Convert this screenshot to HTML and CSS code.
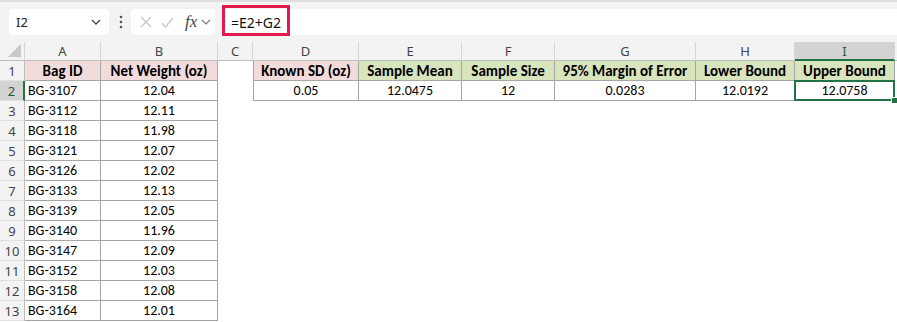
FILE: index.html
```html
<!DOCTYPE html>
<html lang="en">
<head>
<meta charset="UTF-8">
<title>Confidence Interval - Sheet1</title>
<link rel="stylesheet" href="styles.css">
</head>
<body>
    <div class="toolbar">
        <div class="name-box">
            <span>I2</span>
            <svg class="chev" width="10" height="6" viewBox="0 0 10 6"><polyline points="1,1 5,5 9,1" fill="none" stroke="#444" stroke-width="1.3"/></svg>
        </div>
        <svg class="dots" width="4" height="14" viewBox="0 0 4 14"><circle cx="2" cy="2" r="1.3" fill="#555"/><circle cx="2" cy="7" r="1.3" fill="#555"/><circle cx="2" cy="12" r="1.3" fill="#555"/></svg>
        <div class="fx-box">
            <svg width="12" height="12" viewBox="0 0 12 12"><path d="M1 1 L11 11 M11 1 L1 11" stroke="#c4c4c4" stroke-width="1.2"/></svg>
            <svg width="13" height="11" viewBox="0 0 13 11"><polyline points="1,6 4.5,10 12,1" fill="none" stroke="#c4c4c4" stroke-width="1.2"/></svg>
            <span class="fx">fx</span>
            <svg class="chev" width="10" height="6" viewBox="0 0 10 6"><polyline points="1,1 5,5 9,1" fill="none" stroke="#777" stroke-width="1.2"/></svg>
        </div>
        <div class="formula">
            <span class="formula-text">=E2+G2</span>
        </div>
    </div>

    <div class="sheet">
        <div class="corner"><span class="tri"></span></div>
        <div class="ch">A</div>
        <div class="ch">B</div>
        <div class="ch">C</div>
        <div class="ch">D</div>
        <div class="ch">E</div>
        <div class="ch">F</div>
        <div class="ch">G</div>
        <div class="ch">H</div>
        <div class="ch sel">I</div>
        <div class="ch end"></div>

        <div class="rh">1</div>
        <div class="g hd pink">Bag ID</div>
        <div class="g hd pink">Net Weight (oz)</div>
        <div class="e"></div>
        <div class="g l hd pink">Known SD (oz)</div>
        <div class="g hd green">Sample Mean</div>
        <div class="g hd green">Sample Size</div>
        <div class="g hd green">95% Margin of Error</div>
        <div class="g hd green">Lower Bound</div>
        <div class="g hd green">Upper Bound</div>

        <div class="rh sel">2</div>
        <div class="g">BG-3107</div>
        <div class="g n">12.04</div>
        <div class="e"></div>
        <div class="g l n">0.05</div>
        <div class="g n">12.0475</div>
        <div class="g n">12</div>
        <div class="g n">0.0283</div>
        <div class="g n">12.0192</div>
        <div class="g n active">12.0758<span class="cursor"></span></div>

        <div class="rh">3</div><div class="g">BG-3112</div><div class="g n">12.11</div>
        <div class="rh">4</div><div class="g">BG-3118</div><div class="g n">11.98</div>
        <div class="rh">5</div><div class="g">BG-3121</div><div class="g n">12.07</div>
        <div class="rh">6</div><div class="g">BG-3126</div><div class="g n">12.02</div>
        <div class="rh">7</div><div class="g">BG-3133</div><div class="g n">12.13</div>
        <div class="rh">8</div><div class="g">BG-3139</div><div class="g n">12.05</div>
        <div class="rh">9</div><div class="g">BG-3140</div><div class="g n">11.96</div>
        <div class="rh">10</div><div class="g">BG-3147</div><div class="g n">12.09</div>
        <div class="rh">11</div><div class="g">BG-3152</div><div class="g n">12.03</div>
        <div class="rh">12</div><div class="g">BG-3158</div><div class="g n">12.08</div>
        <div class="rh">13</div><div class="g">BG-3164</div><div class="g n">12.01</div>
    </div>
</body>
</html>
```

FILE: styles.css
```css
/* Page */
body {
    margin: 0;
    font-family: Calibri, Carlito, "Liberation Sans", sans-serif;
    background-color: #fff;
    color: #000;
    overflow: hidden;
}

/* Formula bar */
.toolbar {
    height: 40px;
    border-top: 2px solid #dedede;
    background-color: #f3f3f3;
    display: flex;
    align-items: center;
    padding-left: 9px;
    position: relative;
}

.name-box {
    width: 100px;
    height: 26px;
    box-sizing: border-box;
    background-color: #fff;
    border-radius: 4px;
    display: flex;
    align-items: center;
    justify-content: space-between;
    padding: 0 8px 0 7px;
    font-family: "Noto Sans", sans-serif;
    font-size: 13px;
    color: #222;
}

.dots {
    margin: 0 8px 0 10px;
}

.fx-box {
    width: 84px;
    height: 26px;
    box-sizing: border-box;
    background-color: #fff;
    border-radius: 4px;
    display: flex;
    align-items: center;
    gap: 9px;
    padding-left: 9px;
}

.fx {
    font-family: "Liberation Serif", serif;
    font-style: italic;
    font-size: 17px;
    color: #444;
    margin-left: 2px;
    margin-right: -5px;
}

.formula {
    flex: 1;
    height: 26px;
    margin-left: 7px;
    background-color: #fff;
    border-radius: 4px 0 0 4px;
    display: flex;
    align-items: center;
    position: relative;
}

.formula-text {
    font-family: "Noto Sans", sans-serif;
    font-size: 14px;
    color: #111;
    margin-left: 9px;
}

/* red highlight drawn over the formula field */
.formula::before {
    content: "";
    position: absolute;
    left: 0;
    top: -4px;
    width: 68px;
    height: 31px;
    box-sizing: border-box;
    border: 3px solid #e31b4d;
}

/* Grid */
.sheet {
    display: grid;
    grid-template-columns: 25px 76px 117px 35px 106px 103px 93px 141px 99px 100px 1fr;
    grid-template-rows: 19px;
    grid-auto-rows: 20px;
    font-size: 14px;
}

.corner,
.ch {
    background-color: #f3f3f3;
    border-right: 1px solid #d6d6d6;
    border-bottom: 1px solid #bdbdbd;
    box-sizing: border-box;
    text-align: center;
    line-height: 18px;
    color: #444;
    font-family: "Noto Sans", sans-serif;
    font-size: 13px;
}

.corner {
    position: relative;
}

.tri {
    position: absolute;
    right: 3px;
    bottom: 3px;
    border-left: 13px solid transparent;
    border-bottom: 13px solid #c8c8c8;
}

.ch.end {
    border-right: none;
}

.ch.sel {
    background-color: #d3d3d3;
    border-bottom: 2px solid #217346;
    color: #1e5a37;
}

.rh {
    grid-column: 1;
    background-color: #f3f3f3;
    border-right: 1px solid #bdbdbd;
    border-bottom: 1px solid #e0e0e0;
    box-sizing: border-box;
    text-align: center;
    line-height: 20px;
    color: #444;
    font-family: "Noto Sans", sans-serif;
    font-size: 13px;
}

.rh.sel {
    background-color: #d3d3d3;
    border-right: 2px solid #217346;
    color: #1e5a37;
}

.g {
    border-right: 1px solid #a6a6a6;
    border-bottom: 1px solid #a6a6a6;
    box-sizing: border-box;
    padding: 0 3px;
    line-height: 20px;
    white-space: nowrap;
    overflow: hidden;
}

.g.l {
    border-left: 1px solid #a6a6a6;
}

.n,
.hd {
    text-align: center;
}

.hd {
    font-weight: bold;
    font-size: 15px;
    padding: 0;
}

.pink {
    background-color: #f2dcdb;
}

.green {
    background-color: #d8e4bc;
}

.active {
    position: relative;
    overflow: visible;
}

.active::before {
    content: "";
    position: absolute;
    left: -1px;
    top: -1px;
    right: -1px;
    bottom: -1px;
    border: 2px solid #217346;
}

.cursor {
    position: absolute;
    right: -4px;
    bottom: -4px;
    width: 5px;
    height: 5px;
    background-color: #217346;
    border: 1px solid #fff;
}
```
